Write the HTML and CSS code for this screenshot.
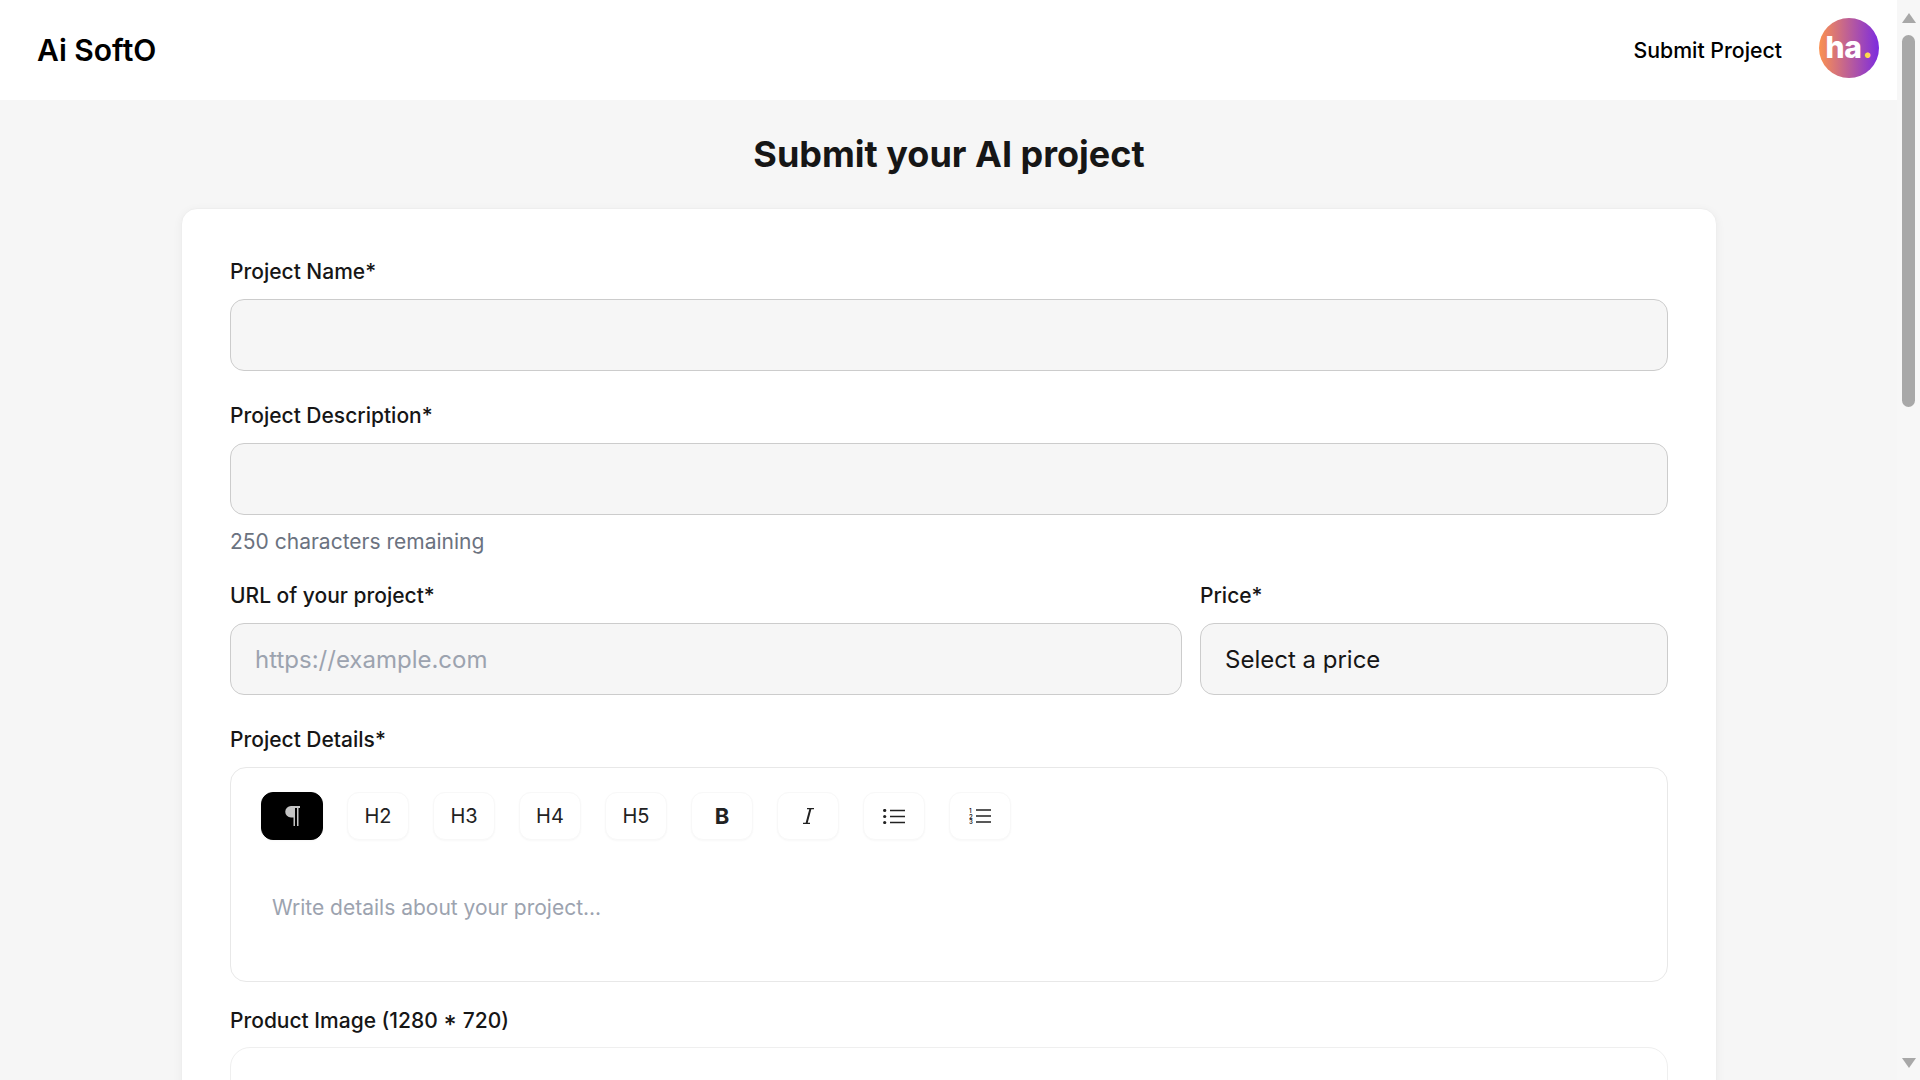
FILE: index.html
```html
<!DOCTYPE html>
<html lang="en">
<head>
  <meta charset="UTF-8">
  <meta name="viewport" content="width=device-width, initial-scale=1.0">
  <title>Submit your AI project - Ai SoftO</title>
  <link rel="stylesheet" href="styles.css">
</head>
<body>
  <div class="page">
    <header class="topbar">
      <a class="logo" href="#">Ai SoftO</a>
      <nav class="topbar-right">
        <a class="nav-link" href="#">Submit Project</a>
        <div class="avatar">ha<span class="avatar-dot">.</span></div>
      </nav>
    </header>

    <main class="content">
      <h1 class="title">Submit your AI project</h1>

      <form class="card">
        <div class="field">
          <label class="label">Project Name*</label>
          <input class="input" type="text">
        </div>

        <div class="field">
          <label class="label">Project Description*</label>
          <input class="input" type="text">
          <p class="hint">250 characters remaining</p>
        </div>

        <div class="field-row">
          <div class="field">
            <label class="label">URL of your project*</label>
            <input class="input" type="text" placeholder="https://example.com">
          </div>
          <div class="field">
            <label class="label">Price*</label>
            <select class="input select">
              <option>Select a price</option>
            </select>
          </div>
        </div>

        <div class="field field-tight">
          <label class="label">Project Details*</label>
          <div class="editor">
            <div class="toolbar">
              <button type="button" class="tool tool-active">
                <svg width="15" height="20" viewBox="0 0 15 20">
                  <path d="M6 0H15V2H13.5V20H12V2H10V20H8.5V11.5H6A5.75 5.75 0 0 1 6 0Z" fill="#c4c4c4"/>
                </svg>
              </button>
              <button type="button" class="tool">H2</button>
              <button type="button" class="tool">H3</button>
              <button type="button" class="tool">H4</button>
              <button type="button" class="tool">H5</button>
              <button type="button" class="tool tool-bold">B</button>
              <button type="button" class="tool">
                <svg width="11" height="16" viewBox="0 0 11 16">
                  <path d="M4 0.6H11M0 15.4H7" fill="none" stroke="#222" stroke-width="1.2"/>
                  <path d="M7.5 0.6L3.5 15.4" fill="none" stroke="#222" stroke-width="2"/>
                </svg>
              </button>
              <button type="button" class="tool">
                <svg width="22" height="15" viewBox="0 0 22 15">
                  <circle cx="1.7" cy="1.5" r="1.6" fill="#222"/>
                  <circle cx="1.7" cy="7.5" r="1.6" fill="#222"/>
                  <circle cx="1.7" cy="13.5" r="1.6" fill="#222"/>
                  <path d="M7 1.5H22M7 7.5H22M7 13.5H22" stroke="#222" stroke-width="1.4"/>
                </svg>
              </button>
              <button type="button" class="tool">
                <svg width="22" height="16" viewBox="0 0 22 16">
                  <text class="tiny-num" x="0" y="5">1</text>
                  <text class="tiny-num" x="0" y="10.5">2</text>
                  <text class="tiny-num" x="0" y="16">3</text>
                  <path d="M7 2H22M7 8H22M7 14H22" stroke="#222" stroke-width="1.4"/>
                </svg>
              </button>
            </div>
            <div class="editor-body">Write details about your project...</div>
          </div>
        </div>

        <div class="field">
          <label class="label label-low">Product Image (1280 * 720)</label>
          <div class="dropzone"></div>
        </div>
      </form>
    </main>
  </div>

  <div class="scrollbar">
    <span class="arrow-up"></span>
    <span class="thumb"></span>
    <span class="arrow-down"></span>
  </div>
</body>
</html>
```

FILE: styles.css
```css
/* Reset */
* {
  margin: 0;
  padding: 0;
  box-sizing: border-box;
}

body {
  display: flex;
  height: 100vh;
  overflow: hidden;
  font-family: "Inter", "Liberation Sans", sans-serif;
  background-color: #f6f6f6;
  color: #111;
}

.page {
  flex: 1;
  min-width: 0;
  height: 100vh;
  overflow: hidden;
}

/* Header */
.topbar {
  display: flex;
  justify-content: space-between;
  align-items: center;
  height: 100px;
  padding: 0 18px 0 37px;
  background-color: #fff;
}

.logo {
  font-size: 30px;
  font-weight: 600;
  color: #000;
  text-decoration: none;
}

.topbar-right {
  display: flex;
  align-items: center;
  gap: 37px;
}

.nav-link {
  font-size: 21.28px;
  font-weight: 500;
  color: #000;
  text-decoration: none;
}

.avatar {
  display: flex;
  justify-content: center;
  align-items: center;
  width: 60px;
  height: 60px;
  margin-bottom: 4px;
  padding-bottom: 3px;
  border-radius: 50%;
  background: linear-gradient(90deg, #fb9150, #7c2be0);
  color: #fff;
  font-size: 30px;
  font-weight: 800;
  letter-spacing: -0.5px;
}

.avatar-dot {
  margin-left: 1px;
  color: #ffd84d;
}

/* Main */
.content {
  padding: 30px 180px 0 181px;
}

.title {
  margin-bottom: 30px;
  font-size: 36px;
  font-weight: 700;
  line-height: 48px;
  text-align: center;
  color: #161616;
}

.card {
  padding: 48px;
  background-color: #fff;
  border: 1px solid #eeeeee;
  border-radius: 16px;
  box-shadow: 0 2px 10px rgba(0, 0, 0, 0.05);
}

.field {
  margin-bottom: 30px;
}

.field-tight {
  margin-bottom: 24px;
}

.field-row {
  display: grid;
  grid-template-columns: 1fr 468px;
  gap: 18px;
}

.label {
  display: block;
  margin-bottom: 12px;
  font-size: 21px;
  font-weight: 500;
  line-height: 30px;
  color: #161616;
}

.label-low {
  margin-bottom: 11px;
}

.input {
  display: block;
  width: 100%;
  height: 72px;
  padding: 0 24px;
  font-family: inherit;
  font-size: 24px;
  color: #161616;
  background-color: #f6f6f6;
  border: 1px solid #cccccc;
  border-radius: 14px;
  outline: none;
}

.input::placeholder {
  color: #9ca3af;
}

.select {
  appearance: none;
}

.hint {
  margin-top: 12px;
  margin-bottom: -6px;
  font-size: 21px;
  line-height: 30px;
  color: #6b7280;
}

/* Editor */
.editor {
  height: 215px;
  padding: 24px 30px;
  border: 1px solid #e8e8e8;
  border-radius: 16px;
}

.toolbar {
  display: flex;
  gap: 24px;
}

.tool {
  display: flex;
  justify-content: center;
  align-items: center;
  width: 62px;
  height: 48px;
  font-family: inherit;
  font-size: 20px;
  color: #222;
  background-color: #fff;
  border: 1px solid #f8f8f8;
  border-radius: 12px;
  box-shadow: 0 1px 2px rgba(0, 0, 0, 0.03);
}

.tool-active {
  background-color: #000;
  border-color: #000;
}

.tool-bold {
  font-size: 22px;
  font-weight: 700;
}

.tiny-num {
  font-family: "Inter", sans-serif;
  font-size: 6px;
  font-weight: 600;
  fill: #222;
}

.editor-body {
  margin-top: 53px;
  padding-left: 11px;
  font-size: 21px;
  line-height: 30px;
  color: #9ca3af;
}

.dropzone {
  height: 240px;
  border: 1px solid #efefef;
  border-radius: 20px;
}

/* Scrollbar drawn by hand, the window one is not in the shot */
.scrollbar {
  position: relative;
  flex: none;
  width: 23px;
  height: 100vh;
  background-color: #f7f7f7;
}

.arrow-up {
  position: absolute;
  top: 13px;
  left: 5px;
  border-left: 7px solid transparent;
  border-right: 7px solid transparent;
  border-bottom: 10px solid #a8a8a8;
}

.thumb {
  position: absolute;
  top: 35px;
  left: 5px;
  width: 13px;
  height: 372px;
  background-color: #a8a8a8;
  border-radius: 7px;
}

.arrow-down {
  position: absolute;
  top: 1058px;
  left: 5px;
  border-left: 7px solid transparent;
  border-right: 7px solid transparent;
  border-top: 10px solid #a8a8a8;
}
```
